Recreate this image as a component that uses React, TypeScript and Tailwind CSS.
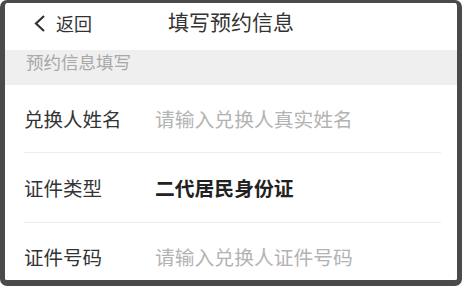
import React from "react";

const font = { fontFamily: '"Noto Sans CJK SC", "Noto Sans", sans-serif' };

function Row({
  label,
  value,
  placeholder,
  divider,
  height,
}: {
  label: string;
  value?: string;
  placeholder?: string;
  divider?: boolean;
  height: string;
}) {
  return (
    <div className={`${height} flex flex-col`}>
      <div className="flex flex-1 items-center pl-[19px] pr-[16px]">
        <div className="w-[131px] text-[19.5px] text-[#333333] leading-none">{label}</div>
        {value ? (
          <div className="text-[19.8px] font-bold text-[#222222] leading-none">{value}</div>
        ) : (
          <div className="text-[19.8px] text-[#b3b3b3] leading-none">{placeholder}</div>
        )}
      </div>
      {divider && <div className="ml-[19px] mr-[16px] h-px bg-[#ececec]" />}
    </div>
  );
}

export default function App() {
  return (
    <div className="w-[465px] h-[289px] bg-white" style={font}>
      <div className="w-[462px] h-[286px] border-l-[5px] border-r-[5px] border-t-[3px] border-b-[6px] border-[#4a4a4a] rounded-[7px] overflow-hidden flex flex-col bg-white">
        <div className="h-[47px] relative flex items-center">
          <div className="absolute left-[28px] top-[11px] flex items-center gap-[10px]">
            <svg width="13" height="17" viewBox="0 0 13 17">
              <polyline points="11,1 3,8.5 11,16" fill="none" stroke="#333" strokeWidth="2.2" />
            </svg>
            <span className="text-[18px] text-[#333333] leading-none">返回</span>
          </div>
          <div className="w-full text-center text-[21px] text-[#333333] leading-none -mt-[10px]">
            填写预约信息
          </div>
        </div>
        <div className="h-[35px] bg-[#efefef] flex items-center pl-[21px] pb-[11px]">
          <span className="text-[17.5px] text-[#a8a8a8] leading-none">预约信息填写</span>
        </div>
        <Row label="兑换人姓名" placeholder="请输入兑换人真实姓名" divider height="h-[68px]" />
        <Row label="证件类型" value="二代居民身份证" divider height="h-[70px]" />
        <div className="flex-1 flex items-center pl-[19px] pt-[10px]">
          <div className="w-[131px] text-[19.5px] text-[#333333] leading-none">证件号码</div>
          <div className="text-[19.8px] text-[#b3b3b3] leading-none">请输入兑换人证件号码</div>
        </div>
      </div>
    </div>
  );
}
